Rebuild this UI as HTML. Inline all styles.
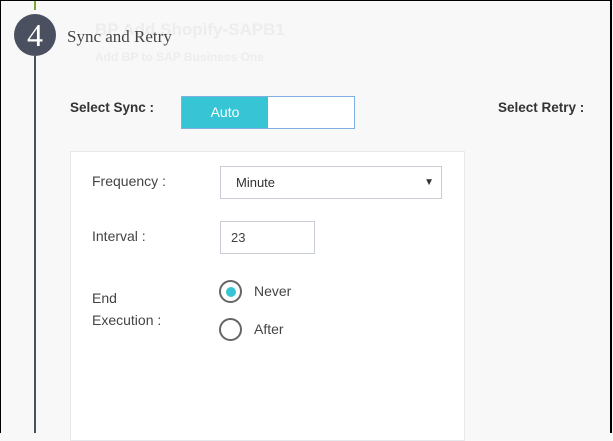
<!DOCTYPE html>
<html><head><style>
*{margin:0;padding:0;box-sizing:border-box}
body{width:613px;height:433px;overflow:hidden;background:#f8f8f8;font-family:"Liberation Sans",Arial,sans-serif;position:relative}
.frame{position:absolute;left:0;top:0;width:612px;height:433px;border-top:1px solid #000;border-left:1px solid #000;border-right:2px solid #000;z-index:5}
.ab{position:absolute}
.ghost{color:#ededed;white-space:nowrap}
</style></head><body>
<div class="frame"></div>
<div class="ab ghost" style="left:95px;top:20px;font-size:17px;font-weight:bold">BP Add Shopify-SAPB1</div>
<div class="ab ghost" style="left:95px;top:50px;font-size:12px;font-weight:bold">Add BP to SAP Business One</div>
<div class="ab" style="left:34px;top:0;width:2px;height:10px;background:#7aa82e"></div>
<div class="ab" style="left:34px;top:56px;width:2px;height:377px;background:#4b5060"></div>
<div class="ab" style="left:14px;top:14px;width:42px;height:42px;border-radius:50%;background:#4b5060;color:#fff;font-family:'Liberation Serif',serif;font-size:32px;line-height:42px;text-align:center">4</div>
<div class="ab" style="left:67px;top:27px;font-family:'Liberation Serif',serif;font-size:17px;color:#444">Sync and Retry</div>
<div class="ab" style="left:70px;top:100px;font-size:13.5px;font-weight:bold;color:#333">Select Sync :</div>
<div class="ab" style="left:181px;top:96px;width:174px;height:33px;border:1px solid #7fb0e0;background:#fff">
<div style="width:86px;height:31px;background:#37c5d5;color:#fff;font-size:14px;line-height:31px;text-align:center">Auto</div></div>
<div class="ab" style="left:498px;top:100px;font-size:13.5px;font-weight:bold;color:#333">Select Retry :</div>
<div class="ab" style="left:70px;top:151px;width:395px;height:290px;background:#fff;border:1px solid #e6e9ec"></div>
<div class="ab" style="left:92px;top:173px;font-size:14px;color:#444">Frequency :</div>
<div class="ab" style="left:220px;top:166px;width:222px;height:33px;border:1px solid #c8ccd4;background:#fff;font-size:13px;color:#333;line-height:31px;padding-left:15px">Minute<span style="position:absolute;right:7px;top:0;font-size:10px">▼</span></div>
<div class="ab" style="left:92px;top:228px;font-size:14px;color:#444">Interval :</div>
<div class="ab" style="left:220px;top:221px;width:95px;height:33px;border:1px solid #c8ccd4;background:#fff;font-size:13px;color:#444;line-height:31px;padding-left:10px">23</div>
<div class="ab" style="left:92px;top:287px;font-size:14px;color:#444;line-height:22px">End<br>Execution :</div>
<div class="ab" style="left:219px;top:280px;width:23px;height:23px;border-radius:50%;border:2px solid #666;background:#fff"><div style="margin:4.5px;width:10px;height:10px;border-radius:50%;background:#37c5d5"></div></div>
<div class="ab" style="left:254px;top:283px;font-size:14px;color:#444">Never</div>
<div class="ab" style="left:219px;top:318px;width:23px;height:23px;border-radius:50%;border:2px solid #666;background:#fff"></div>
<div class="ab" style="left:254px;top:321px;font-size:14px;color:#444">After</div>
</body></html>
